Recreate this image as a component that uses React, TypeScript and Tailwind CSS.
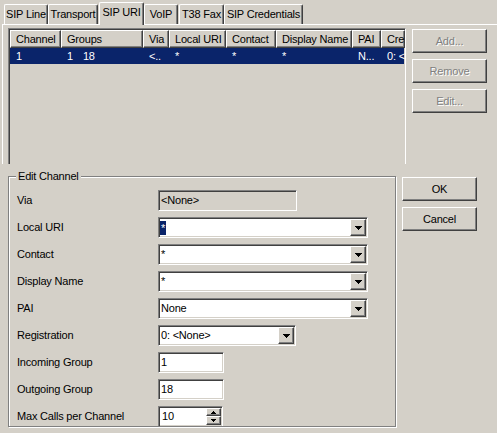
import React from "react";

const sunken =
  "border border-t-[#808080] border-l-[#808080] border-b-white border-r-white shadow-[inset_1px_1px_0_#404040,inset_-1px_-1px_0_#d4d0c8]";
const raised =
  "border border-t-white border-l-white border-b-[#404040] border-r-[#404040] shadow-[inset_-1px_-1px_0_#808080]";

function DownArrow() {
  return (
    <svg width="7" height="4" viewBox="0 0 7 4" shapeRendering="crispEdges">
      <rect x="0" y="0" width="7" height="1" fill="#000" />
      <rect x="1" y="1" width="5" height="1" fill="#000" />
      <rect x="2" y="2" width="3" height="1" fill="#000" />
      <rect x="3" y="3" width="1" height="1" fill="#000" />
    </svg>
  );
}

function SmallArrow({ up }: { up?: boolean }) {
  return (
    <svg width="5" height="3" viewBox="0 0 5 3" shapeRendering="crispEdges">
      {up ? (
        <>
          <rect x="2" y="0" width="1" height="1" fill="#000" />
          <rect x="1" y="1" width="3" height="1" fill="#000" />
          <rect x="0" y="2" width="5" height="1" fill="#000" />
        </>
      ) : (
        <>
          <rect x="0" y="0" width="5" height="1" fill="#000" />
          <rect x="1" y="1" width="3" height="1" fill="#000" />
          <rect x="2" y="2" width="1" height="1" fill="#000" />
        </>
      )}
    </svg>
  );
}

function Tab({ label, w, selected }: { label: string; w: string; selected?: boolean }) {
  return (
    <div
      className={
        selected
          ? `${w} h-[23px] -mb-[1px] relative z-10 bg-[#d4d0c8] border-l border-t border-white border-r border-r-[#404040] shadow-[inset_-1px_0_0_#808080] rounded-t-[2px] flex justify-center pt-[3px] leading-[13px]`
          : `${w} h-[20px] bg-[#d4d0c8] border-l border-t border-white border-r border-r-[#404040] shadow-[inset_-1px_0_0_#808080] rounded-t-[2px] flex justify-center pt-[3px] leading-[13px]`
      }
    >
      {label}
    </div>
  );
}

function Btn({ label, disabled }: { label: string; disabled?: boolean }) {
  return (
    <div
      className={`${raised} w-[75px] h-[24px] flex items-center justify-center ${
        disabled ? "text-[#808080] [text-shadow:1px_1px_0_#ffffff]" : "text-black"
      }`}
    >
      {label}
    </div>
  );
}

function Combo({ w, children }: { w: string; children: React.ReactNode }) {
  return (
    <div className={`${sunken} ${w} h-[21px] p-[1px] flex bg-white`}>
      <div className="flex-1 flex items-center overflow-hidden whitespace-nowrap">{children}</div>
      <div className={`${raised} bg-[#d4d0c8] w-[16px] flex items-center justify-center`}>
        <DownArrow />
      </div>
    </div>
  );
}

function Edit({ w, value, gray }: { w: string; value: string; gray?: boolean }) {
  return (
    <div
      className={`${sunken} ${w} h-[21px] p-[1px] flex items-center ${gray ? "bg-[#d4d0c8]" : "bg-white"}`}
    >
      <span className="pl-[1px] whitespace-nowrap">{value}</span>
    </div>
  );
}

function Row({ label, children }: { label: string; children: React.ReactNode }) {
  return (
    <div className="h-[21px] flex items-center">
      <div className="w-[141px] whitespace-nowrap">{label}</div>
      {children}
    </div>
  );
}

const cols: { name: string; w: string; val: React.ReactNode }[] = [
  { name: "Channel", w: "w-[51px]", val: "1" },
  {
    name: "Groups",
    w: "w-[82px]",
    val: (
      <>
        <span>1</span>
        <span className="ml-[10px]">18</span>
      </>
    ),
  },
  { name: "Via", w: "w-[26px]", val: "<.." },
  { name: "Local URI", w: "w-[57px]", val: "*" },
  { name: "Contact", w: "w-[50px]", val: "*" },
  { name: "Display Name", w: "w-[76px]", val: "*" },
  { name: "PAI", w: "w-[29px]", val: "N..." },
  { name: "Cre", w: "w-[24px]", val: "0: <" },
];

export default function App() {
  return (
    <div className="w-[497px] h-[433px] overflow-hidden bg-[#d4d0c8] text-black text-[11px] tracking-[-0.2px] font-['Liberation_Sans',Arial,sans-serif]">
      {/* Tabs */}
      <div className="h-[24px] flex items-end pl-[4px]">
        <Tab label="SIP Line" w="w-[44px]" />
        <Tab label="Transport" w="w-[50px]" />
        <div className="w-[1px]" />
        <Tab label="SIP URI" w="w-[45px]" selected />
        <Tab label="VoIP" w="w-[34px]" />
        <div className="w-[1px]" />
        <Tab label="T38 Fax" w="w-[45px]" />
        <Tab label="SIP Credentials" w="w-[79px]" />
      </div>

      {/* Tab panel */}
      <div className="ml-[2px] h-[140px] border-t border-l border-white flex items-start pt-[3px] pl-[5px] overflow-hidden">
        <div className={`${sunken} w-[398px] h-[140px] shrink-0 p-[1px] overflow-hidden`}>
          <div className="flex h-[18px] whitespace-nowrap">
            {cols.map((c) => (
              <div
                key={c.name}
                className={`${raised} ${c.w} shrink-0 h-[18px] flex items-center pl-[5px] overflow-hidden`}
              >
                {c.name}
              </div>
            ))}
          </div>
          <div className="flex h-[16px] bg-[#0a246a] text-white whitespace-nowrap">
            {cols.map((c) => (
              <div key={c.name} className={`${c.w} shrink-0 flex items-center pl-[6px] overflow-hidden`}>
                {c.val}
              </div>
            ))}
          </div>
        </div>
        <div className="ml-[6px] mt-[1px] flex flex-col gap-[6px]">
          <Btn label="Add..." disabled />
          <Btn label="Remove" disabled />
          <Btn label="Edit..." disabled />
        </div>
      </div>

      {/* Bottom */}
      <div className="flex items-start">
        <fieldset className="ml-[8px] mt-[6px] w-[388px] h-[257px] border border-[#808080] shadow-[inset_1px_1px_0_#ffffff,1px_1px_0_#ffffff] overflow-hidden">
          <legend className="ml-[7px] px-[2px] bg-[#d4d0c8] leading-[13px]">Edit Channel</legend>
          <div className="pt-[7px] pl-[8px] flex flex-col gap-[6px]">
            <Row label="Via">
              <Edit w="w-[139px]" value="<None>" gray />
            </Row>
            <Row label="Local URI">
              <Combo w="w-[210px]">
                <span className="bg-[#0a246a] text-white px-[1px] leading-[14px]">*</span>
              </Combo>
            </Row>
            <Row label="Contact">
              <Combo w="w-[210px]">
                <span className="pl-[1px]">*</span>
              </Combo>
            </Row>
            <Row label="Display Name">
              <Combo w="w-[210px]">
                <span className="pl-[1px]">*</span>
              </Combo>
            </Row>
            <Row label="PAI">
              <Combo w="w-[210px]">
                <span className="pl-[1px]">None</span>
              </Combo>
            </Row>
            <Row label="Registration">
              <Combo w="w-[138px]">
                <span className="pl-[1px]">0: &lt;None&gt;</span>
              </Combo>
            </Row>
            <Row label="Incoming Group">
              <Edit w="w-[66px]" value="1" />
            </Row>
            <Row label="Outgoing Group">
              <Edit w="w-[66px]" value="18" />
            </Row>
            <Row label="Max Calls per Channel">
              <div className={`${sunken} w-[65px] h-[21px] p-[1px] flex bg-white`}>
                <div className="flex-1 flex items-center pl-[2px]">10</div>
                <div className="w-[15px] flex flex-col">
                  <div className={`${raised} bg-[#d4d0c8] h-[8px] flex items-center justify-center`}>
                    <SmallArrow up />
                  </div>
                  <div className={`${raised} bg-[#d4d0c8] h-[9px] flex items-center justify-center`}>
                    <SmallArrow />
                  </div>
                </div>
              </div>
            </Row>
          </div>
        </fieldset>
        <div className="ml-[6px] mt-[13px] flex flex-col gap-[6px]">
          <Btn label="OK" />
          <Btn label="Cancel" />
        </div>
      </div>
    </div>
  );
}
